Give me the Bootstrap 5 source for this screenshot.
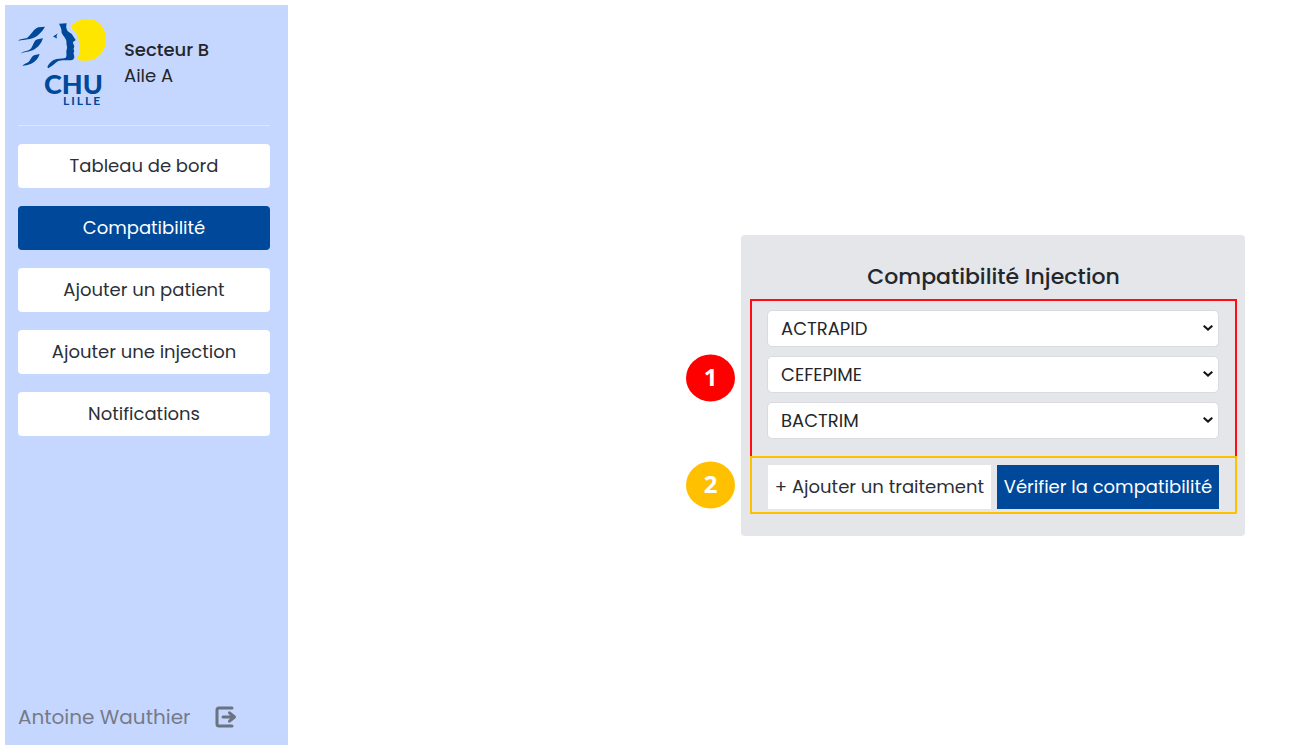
<!DOCTYPE html>
<html lang="fr">
<head>
<meta charset="utf-8">
<meta name="viewport" content="width=device-width, initial-scale=1">
<title>Compatibilité Injection</title>
<link href="https://cdn.jsdelivr.net/npm/bootstrap@5.3.0/dist/css/bootstrap.min.css" rel="stylesheet">
<style>
  :root { --chu-blue: #00489a; --chu-pale: #c6d7ff; }
  body { font-family: Poppins, Inter, "Open Sans", sans-serif; font-size: 18px; line-height: 26px; color: #23262b; background: #fff; }
  .app-shell { padding: 5px 0 5px 5px; }
  .side-panel { width: 283px; padding: 13px 18px 13px 13px; background: var(--chu-pale); }
  .side-head { gap: 18px; padding-bottom: 17px; border-bottom: 1px solid #dbe5fc; }
  .side-head svg { width: 88px; height: 90px; }
  .sector-name { font-weight: 500; }
  .side-nav { gap: 18px; padding-top: 18px; }
  .side-nav .btn { height: 44px; padding: 8px; border: 0; border-radius: 4px; font-size: 18px; line-height: 28px; background: #fff; color: #2c2f38; }
  .side-nav .btn.active { background: var(--chu-blue); color: #fff; -webkit-text-stroke: 0 #fff; }
  .side-foot { gap: 24px; color: #757b88; font-size: 20px; line-height: 30px; }
  .work-area { padding: 20px 52px 0 24px; }
  .check-card { width: 504px; padding: 26px 8px 22px 9px; background: #e4e6ea; border: 0; border-radius: 4px; }
  .check-card h1 { font-size: 22px; line-height: 32px; font-weight: 500; padding-bottom: 6px; margin: 0; }
  .zone { border: 2px solid; }
  .zone-drugs { border-color: #ff0d12; padding: 9px 16px 17px 15px; gap: 9px; }
  .zone-actions { border-color: #ffc000; padding: 7px 16px 3px; gap: 6px; margin-top: -2px; }
  .zone-actions .btn { height: 44px; padding: 0; border: 0; border-radius: 0; font-size: 18px; line-height: 44px; white-space: nowrap; }
  .btn-add-drug { background: #fff; color: #2c2f38; }
  .btn-verify, .btn-verify:hover { background: var(--chu-blue); color: #fff; }
  .zone .form-select { height: 37px; padding: 0 30px 0 13px; border: 1px solid #d9dbe0; border-radius: 5px; font-size: 18px; color: #23262b;
    background-image: url("data:image/svg+xml,%3Csvg xmlns='http://www.w3.org/2000/svg' viewBox='0 0 10 6'%3E%3Cpath fill='none' stroke='%23151515' stroke-width='2' d='M.7.7 5 4.6 9.3.7'/%3E%3C/svg%3E");
    background-size: 10px 6px; background-position: right 5px center; }
  .step-dot { left: -66px; width: 49px; height: 47px; padding-bottom: 3px; color: #fff; font-size: 24px; font-weight: 700; font-family: "Open Sans", sans-serif; }
  .dot-red { background: #f00; }
  .dot-gold { background: #ffc000; }
</style>
</head>
<body>
<div class="app-shell d-flex min-vh-100">
  <aside class="side-panel d-flex flex-column flex-shrink-0">
    <div class="side-head d-flex align-items-center">
      <svg viewBox="18 18 88 90" role="img" aria-label="CHU Lille">
        <path fill="#ffe600" d="M71.500 25.500C76 20.500 82 19 87.700 19 99 19 106 28 106 39.500 106 52 97 60.700 86.700 60.700 82 61 78 60.500 77 59 80 54 80.500 49 79.300 43 78 40 79 37 76 33.300 73 30 71 28 71.500 25.500z"/>
        <g fill="#00489a">
          <path d="M18.300 40.800C20 38.700 24 39 27 38 31 35 34 28.500 38.300 27.300L45 26.700C42 32 37 37.500 30 39 25 40 22 40 18.300 40.800z"/>
          <path d="M20.700 53.500C23 51 28 51.500 31 48.500 34 44 34 40 37.700 39.300L43 38.300C41 44 38 47.500 33.300 50 28 52 24 52 20.700 53.500z"/>
          <path d="M22.300 66C24 63.500 27 63.500 29 61.500 31 59 32 55.500 35 55L39.700 54C38 59 35 62 31.700 63.500 28 65.500 25 65 22.300 66z"/>
          <path d="M59 23.700L66.700 23.300C66 26 66 28 67.300 30.500 69 33 72 33 73 36L75.700 40 72.800 42.300 74.300 46.500 73.500 49 74.300 51 73.500 53 74.300 56.500C74.300 60 72 60.300 69 60.300 64 60 61 60 58.300 61 55 63 54 65 48.300 68.300L47.300 67C49 63 52 60 56.700 59 60 58.300 64 59 66 57.500 67 55 66 53 66.500 50 68 47 66 45 66.500 42 66 38 63 36 61.500 32.500 62 29 60 26 59 23.700z"/>
          <path d="M53 36.500L57.700 33.500 56.500 36 57 38.500z"/>
        </g>
        <text x="44" y="94" fill="#00489a" font-family="Lato, sans-serif" font-size="27" font-weight="900">CHU</text>
        <text x="63" y="105" fill="#00489a" font-family="Lato, sans-serif" font-size="12" font-weight="700" letter-spacing="2">LILLE</text>
      </svg>
      <div>
        <p class="sector-name mb-0">Secteur B</p>
        <p class="mb-0">Aile A</p>
      </div>
    </div>
    <nav class="side-nav d-flex flex-column">
      <a href="#" class="btn">Tableau de bord</a>
      <a href="#" class="btn active" aria-current="page">Compatibilité</a>
      <a href="#" class="btn">Ajouter un patient</a>
      <a href="#" class="btn">Ajouter une injection</a>
      <a href="#" class="btn">Notifications</a>
    </nav>
    <div class="side-foot d-flex align-items-center mt-auto">
      <span>Antoine Wauthier</span>
      <button type="button" class="btn p-0 border-0 d-flex" aria-label="Se déconnecter">
        <svg width="22" height="22" viewBox="0 0 22 22" fill="none" stroke="#6b7280" stroke-width="3" stroke-linecap="round" stroke-linejoin="round"><path d="M17 2H4Q2 2 2 4v14q0 2 2 2h13M8 11h11M14.500 6.800L19.500 11l-5 4.200"/></svg>
      </button>
    </div>
  </aside>
  <main class="work-area flex-grow-1 d-flex align-items-center justify-content-end">
    <form class="check-card card">
      <h1 class="text-center">Compatibilité Injection</h1>
      <div class="zone zone-drugs position-relative d-flex flex-column">
        <span class="step-dot dot-red position-absolute top-50 translate-middle-y rounded-circle d-flex align-items-center justify-content-center">1</span>
        <select class="form-select" aria-label="Traitement 1"><option>ACTRAPID</option></select>
        <select class="form-select" aria-label="Traitement 2"><option>CEFEPIME</option></select>
        <select class="form-select" aria-label="Traitement 3"><option>BACTRIM</option></select>
      </div>
      <div class="zone zone-actions position-relative d-flex">
        <span class="step-dot dot-gold position-absolute top-50 translate-middle-y rounded-circle d-flex align-items-center justify-content-center">2</span>
        <button type="button" class="btn btn-add-drug flex-fill">+ Ajouter un traitement</button>
        <button type="submit" class="btn btn-verify flex-fill">Vérifier la compatibilité</button>
      </div>
    </form>
  </main>
</div>
<script src="https://cdn.jsdelivr.net/npm/bootstrap@5.3.0/dist/js/bootstrap.bundle.min.js"></script>
</body>
</html>
